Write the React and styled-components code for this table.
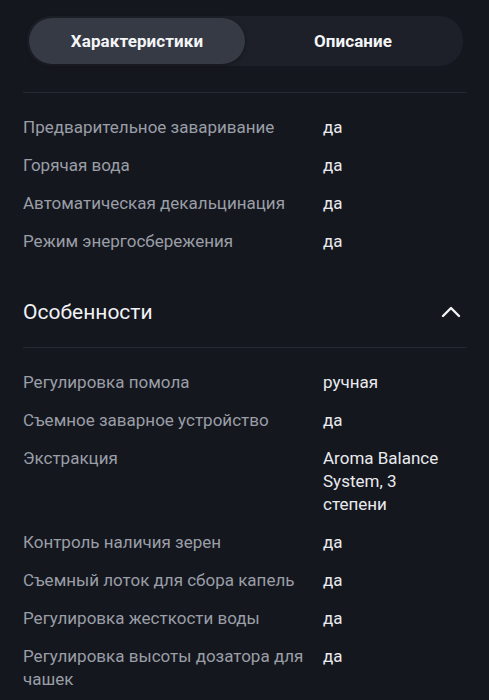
import styled, { createGlobalStyle } from "styled-components";

const GlobalStyle = createGlobalStyle`
  html, body {
    margin: 0;
    background: #15171e;
  }
  body {
    font-family: Roboto, "Noto Sans", sans-serif;
  }
`;

const general = [
  ["Предварительное заваривание", "да"],
  ["Горячая вода", "да"],
  ["Автоматическая декальцинация", "да"],
  ["Режим энергосбережения", "да"],
];

const features = [
  ["Регулировка помола", "ручная"],
  ["Съемное заварное устройство", "да"],
  ["Экстракция", "Aroma Balance System, 3 степени"],
  ["Контроль наличия зерен", "да"],
  ["Съемный лоток для сбора капель", "да"],
  ["Регулировка жесткости воды", "да"],
  ["Регулировка высоты дозатора для чашек", "да"],
];

function ChevronUp() {
  return (
    <svg width="20" height="14" viewBox="0 0 20 14" fill="none">
      <polyline
        points="2,11 10,3 18,11"
        stroke="#f2f2f4"
        strokeWidth="2.4"
        strokeLinecap="round"
        strokeLinejoin="round"
      />
    </svg>
  );
}

function SpecList({ rows }) {
  return (
    <List>
      {rows.map(([label, value]) => (
        <Row key={label}>
          <Label>{label}</Label>
          <Value>{value}</Value>
        </Row>
      ))}
    </List>
  );
}

export default function App() {
  return (
    <Page>
      <GlobalStyle />
      <Tabs>
        <Tab $active>Характеристики</Tab>
        <Tab>Описание</Tab>
      </Tabs>
      <Divider $gap={26} />
      <SpecList rows={general} />
      <SectionHeader>
        <SectionTitle>Особенности</SectionTitle>
        <ChevronUp />
      </SectionHeader>
      <Divider $gap={20} />
      <SpecList rows={features} />
    </Page>
  );
}

const Page = styled.div`
  padding: 16px 23px 0 23px;
  color: #eceef2;
`;

const Tabs = styled.div`
  display: grid;
  grid-template-columns: 1fr 1fr;
  margin: 0 3px 0 4px;
  padding: 2px;
  height: 46px;
  background: #1d2028;
  border-radius: 24px;
`;

const Tab = styled.div`
  display: flex;
  align-items: center;
  justify-content: center;
  border-radius: 23px;
  font-size: 17px;
  font-weight: 700;
  letter-spacing: 0.1px;
  color: #f4f5f7;
  background: ${(p) => (p.$active ? "#363a45" : "transparent")};
  box-shadow: ${(p) => (p.$active ? "0 1px 4px rgba(0,0,0,0.35)" : "none")};
`;

const Divider = styled.div`
  height: 1px;
  background: #262a32;
  margin-top: ${(p) => p.$gap}px;
`;

const List = styled.div`
  display: flex;
  flex-direction: column;
  gap: 15px;
  padding-top: 23px;
`;

const Row = styled.div`
  display: grid;
  grid-template-columns: 290px 1fr;
  column-gap: 10px;
  font-size: 17px;
  line-height: 23px;
`;

const Label = styled.div`
  color: #9a9ea7;
`;

const Value = styled.div`
  color: #e9eaee;
  max-width: 128px;
`;

const SectionHeader = styled.div`
  display: flex;
  align-items: center;
  justify-content: space-between;
  margin-top: 44px;
  padding-right: 5px;
  height: 30px;
`;

const SectionTitle = styled.div`
  font-size: 21px;
  color: #f1f2f5;
`;
